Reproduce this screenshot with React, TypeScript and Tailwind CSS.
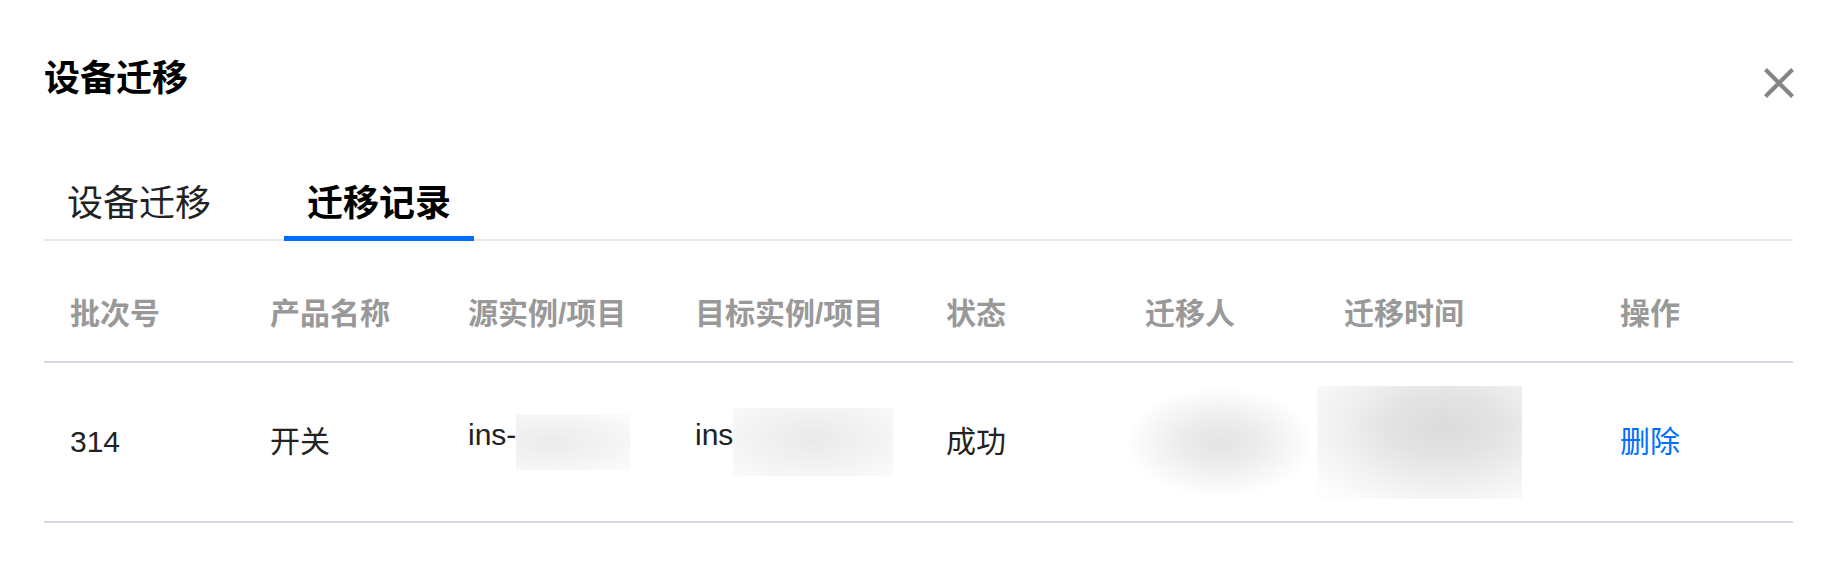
import React, { useState } from 'react';

const FONT = { fontFamily: '"Liberation Sans", "Noto Sans CJK SC", sans-serif' };

const COLS = 'grid grid-cols-[200px_198px_227px_251px_199px_199px_276px_199px]';

const headers = ['批次号', '产品名称', '源实例/项目', '目标实例/项目', '状态', '迁移人', '迁移时间', '操作'];

const CloseIcon: React.FC = () => (
  <svg width="32" height="32" viewBox="0 0 32 32" fill="none">
    <path d="M2.5 2.5 L29.5 29.5 M29.5 2.5 L2.5 29.5" stroke="#858585" strokeWidth="4.2" />
  </svg>
);

const App: React.FC = () => {
  const [tab, setTab] = useState(1);

  return (
    <div className="min-h-screen bg-white pl-[44px] pr-[42px] pt-[54px]" style={FONT}>
      {/* title */}
      <div className="flex items-start justify-between">
        <h1 className="text-[36px] leading-[50px] font-bold text-black">设备迁移</h1>
        <button className="mt-[13px] -mr-[2px]">
          <CloseIcon />
        </button>
      </div>

      {/* tabs */}
      <div className="mt-[75px] flex gap-[50px] border-b-2 border-[#e5e7eb]">
        {['设备迁移', '迁移记录'].map((t, i) => (
          <button
            key={t}
            onClick={() => setTab(i)}
            className={`-mb-[2px] px-[23px] pb-[7px] text-[36px] leading-[50px] border-b-[5px] ${
              tab === i ? 'border-[#006eff] font-bold text-black' : 'border-transparent text-[#222]'
            }`}
          >
            {t}
          </button>
        ))}
      </div>

      {/* table */}
      <div>
        <div className={`${COLS} border-b-2 border-[#d4d8e2]`}>
          {headers.map(h => (
            <div key={h} className="pl-[26px] pt-[52px] pb-[26px] text-[30px] leading-[42px] font-bold text-[#999]">
              {h}
            </div>
          ))}
        </div>

        <div className={`${COLS} h-[160px] border-b-2 border-[#d4d8e2] text-[30px] leading-[42px] text-[#222]`}>
          <div className="flex items-center pl-[26px]">314</div>
          <div className="flex items-center pl-[26px]">开关</div>
          <div className="flex items-center pl-[26px]">
            <span className="mb-[14px]">ins-</span>
            <div className="h-[56px] w-[114px] bg-[radial-gradient(ellipse_at_30%_50%,#ebebeb_0%,#f2f2f2_45%,#fcfcfc_100%)]" />
          </div>
          <div className="flex items-center pl-[26px]">
            <span className="mb-[14px]">ins</span>
            <div className="h-[68px] w-[160px] bg-[radial-gradient(ellipse_at_50%_45%,#e9e9e9_0%,#f1f1f1_45%,#fbfbfb_100%)]" />
          </div>
          <div className="flex items-center pl-[26px]">成功</div>
          <div className="flex items-center pl-[6px]">
            <div className="h-[110px] w-[190px] bg-[radial-gradient(closest-side,#e4e4e4_0%,#ececec_40%,#f7f7f7_75%,#ffffff_100%)]" />
          </div>
          <div className="flex items-center -ml-px">
            <div className="h-[113px] w-[205px] bg-[radial-gradient(ellipse_at_62%_35%,#dbdbdb_0%,#e3e3e3_30%,#f1f1f1_60%,#fdfdfd_90%)]" />
          </div>
          <div className="flex items-center pl-[26px]">
            <button className="text-[30px] leading-[42px] text-[#006eff]">删除</button>
          </div>
        </div>
      </div>
    </div>
  );
};

export default App;
